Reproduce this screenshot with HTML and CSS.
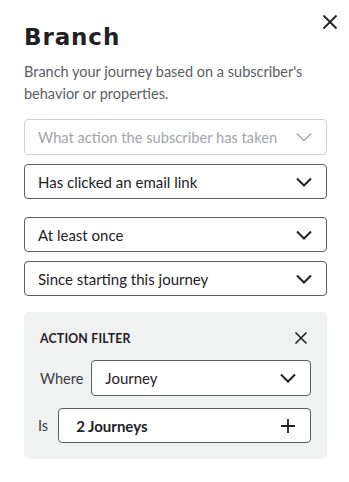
FILE: index.html
```html
<!DOCTYPE html>
<html>
<head>
<meta charset="utf-8">
<link rel="stylesheet" href="styles.css">
</head>
<body>
<div class="sheet">
  <button class="close" aria-label="Close">
    <svg width="16" height="16" viewBox="0 0 16 16"><path d="M1.5 1.5 L14.5 14.5 M14.5 1.5 L1.5 14.5" stroke="#1f2124" stroke-width="1.8" fill="none"/></svg>
  </button>
  <h1 class="title">Branch</h1>
  <p class="desc">Branch your journey based on a subscriber's behavior or properties.</p>

  <div class="group">
    <div class="select placeholder"><span>What action the subscriber has taken</span>
      <svg class="chev" width="16" height="10" viewBox="0 0 16 10"><path d="M1 1.5 L8 8.5 L15 1.5" stroke="#a8a8a8" stroke-width="1.5" fill="none"/></svg>
    </div>
    <div class="select"><span>Has clicked an email link</span>
      <svg class="chev" width="16" height="10" viewBox="0 0 16 10"><path d="M1 1.5 L8 8.5 L15 1.5" stroke="#1f2124" stroke-width="2" fill="none"/></svg>
    </div>
  </div>

  <div class="group">
    <div class="select"><span>At least once</span>
      <svg class="chev" width="16" height="10" viewBox="0 0 16 10"><path d="M1 1.5 L8 8.5 L15 1.5" stroke="#1f2124" stroke-width="2" fill="none"/></svg>
    </div>
    <div class="select"><span>Since starting this journey</span>
      <svg class="chev" width="16" height="10" viewBox="0 0 16 10"><path d="M1 1.5 L8 8.5 L15 1.5" stroke="#1f2124" stroke-width="2" fill="none"/></svg>
    </div>
  </div>

  <div class="filter">
    <div class="filter-head">
      <span class="filter-title">ACTION FILTER</span>
      <svg width="14" height="14" viewBox="0 0 14 14"><path d="M1.5 1.5 L12.5 12.5 M12.5 1.5 L1.5 12.5" stroke="#1f2124" stroke-width="1.6" fill="none"/></svg>
    </div>
    <div class="filter-row">
      <span class="label">Where</span>
      <div class="select small"><span>Journey</span>
        <svg class="chev" width="16" height="10" viewBox="0 0 16 10"><path d="M1 1.5 L8 8.5 L15 1.5" stroke="#1f2124" stroke-width="2" fill="none"/></svg>
      </div>
    </div>
    <div class="filter-row">
      <span class="label is">Is</span>
      <div class="select small bold"><span>2 Journeys</span>
        <svg class="chev" width="16" height="16" viewBox="0 0 16 16"><path d="M8 1 V15 M1 8 H15" stroke="#1f2124" stroke-width="1.8" fill="none"/></svg>
      </div>
    </div>
  </div>
</div>
</body>
</html>
```
FILE: styles.css
```css
* { box-sizing: border-box; }
html, body { margin: 0; padding: 0; background: #fff; }
body { font-family: "Lato", "Noto Sans", sans-serif; color: #1f2124; }
.sheet { position: relative; padding: 19px 22px 24px 24px; width: 349px; }
.close { position: absolute; top: 14px; right: 11px; background: none; border: 0; padding: 0; width: 16px; height: 16px; display: flex; }
.title { margin: 0; padding-top: 4px; font-family: "DejaVu Sans", sans-serif; font-weight: bold; font-size: 23px; line-height: 28px; letter-spacing: 0.9px; color: #1f2124; }
.desc { margin: 10px 0 0; font-size: 14.5px; line-height: 22px; color: #5b5e62; }
.group { display: flex; flex-direction: column; gap: 9px; margin-top: 14px; }
.group + .group { margin-top: 18px; }
.select { display: flex; align-items: center; justify-content: space-between; height: 35px; border: 1px solid #5b5e62; border-radius: 4px; padding: 0 14px 0 13px; font-size: 15px; color: #1f2124; background: #fff; }
.select.placeholder { border-color: #cfd1d3; color: #a3a5a8; height: 36px; font-size: 14.7px; }
.chev { flex: none; }
.filter { margin-top: 16px; background: #f0f1f1; border-radius: 5px; padding: 16px 16px 16px 16px; }
.filter-head { display: flex; align-items: center; justify-content: space-between; height: 20px; padding-right: 3px; }
.filter-title { font-weight: bold; font-size: 12.3px; letter-spacing: 0.2px; color: #1f2124; }
.filter-row { display: flex; align-items: center; gap: 8px; margin-top: 12px; }
.filter-row + .filter-row { margin-top: 12px; }
.label { font-size: 14.5px; color: #3a3d40; }
.label.is { margin-left: -2px; gap: 0; }
.filter-row:last-child { gap: 10px; }
.select.small { flex: 1; height: 36px; padding: 0 14px 0 13px; }
.select.bold { font-weight: bold; padding-left: 17px; height: 35px; }
```
